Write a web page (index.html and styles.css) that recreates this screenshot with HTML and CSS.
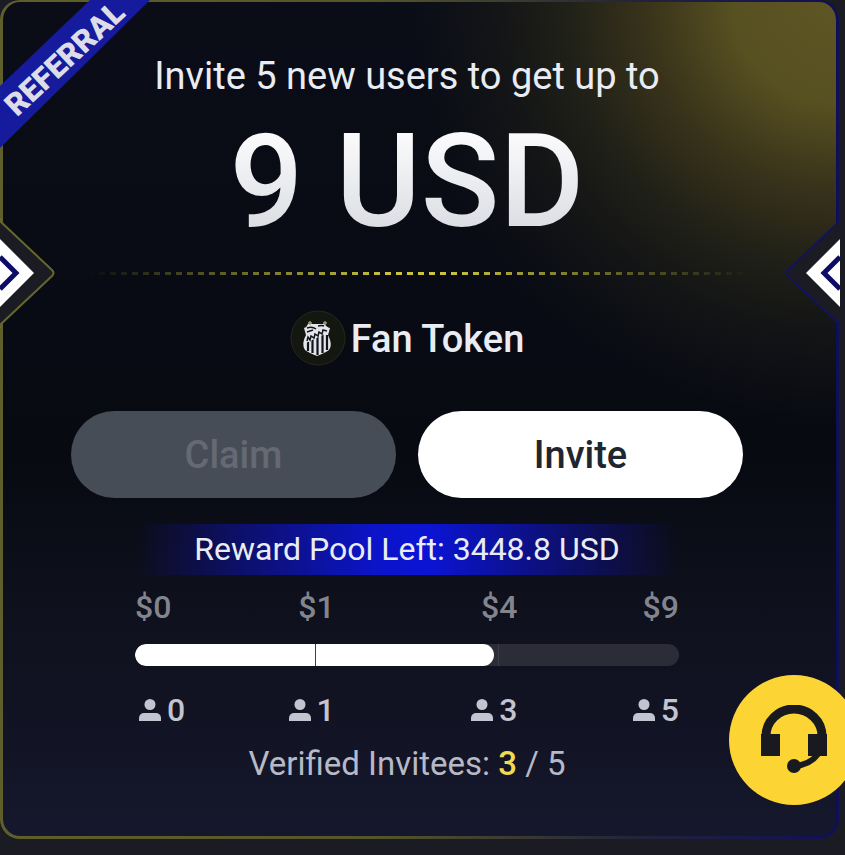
FILE: index.html
```html
<!DOCTYPE html>
<html lang="en">
<head>
    <meta charset="UTF-8">
    <meta name="viewport" content="width=device-width, initial-scale=1.0">
    <title>Referral Rewards</title>
    <link rel="stylesheet" href="styles.css">
</head>
<body>
    <svg class="sprite" width="0" height="0" aria-hidden="true">
        <symbol id="person" viewBox="0 0 22 22">
            <circle cx="11" cy="5.500" r="5.500" />
            <path d="M0 22v-3a5 5 0 0 1 5-5h12a5 5 0 0 1 5 5v3z" />
        </symbol>
        <symbol id="notch" viewBox="0 0 56 110">
            <path class="notch-fill" d="M0 4 3 5 52 52q3 3 0 6L3 105l-3 1z" />
            <path class="notch-line" d="M1 0v4l51 48q3 3 0 6L1 106v4" />
            <path class="notch-arrow" d="M0 21 34 55 0 89z" />
            <path class="notch-inner" d="M0 39 16 55 0 71" />
        </symbol>
    </svg>

    <main class="card">
        <div class="ribbon"><span>REFERRAL</span></div>

        <p class="subtitle">Invite 5 new users to get up to</p>
        <h1 class="amount">9 USD</h1>

        <div class="divider">
            <svg class="notch notch-left" aria-hidden="true"><use href="#notch" /></svg>
            <div class="dashes"></div>
            <svg class="notch notch-right" aria-hidden="true"><use href="#notch" /></svg>
        </div>

        <div class="token">
            <svg class="token-logo" viewBox="0 0 56 56" aria-hidden="true">
                <circle cx="28" cy="28" r="27" fill="#14170f" stroke="#25281a" />
                <path d="M14 18q3-1 4-4h17q1 3 5 4l-2 7q5 10 1 15-4 3-12 6-8-3-12-6-4-6 1-15z" fill="#e4e5ea" />
                <path d="M18 29v12M22.500 27v16M27.500 25v20M32.500 23v20M37 25v15" stroke="#10131b" stroke-width="2.200" />
                <path d="M15 28 38 17l1 5-23 11z" fill="#e4e5ea" />
                <path d="m17 31 1-4 2 3 1-4 3 2 1-4 3 2 1-4 3 2 1-4 4 1" fill="none" stroke="#10131b" stroke-width="1.500" />
                <path d="M17 18q5-2 9 1m2-3q4-1 6 0M17 22l6-2" fill="none" stroke="#10131b" stroke-width="1.500" />
                <path d="M20 11v4m-2-2h4M35 11v4m-2-2h4" stroke="#9b9b72" stroke-width="1.500" />
            </svg>
            <span>Fan Token</span>
        </div>

        <div class="actions">
            <button class="btn btn-claim" type="button" disabled>Claim</button>
            <button class="btn btn-invite" type="button">Invite</button>
        </div>

        <p class="pool">Reward Pool Left: 3448.8 USD</p>

        <section class="progress">
            <div class="scale rewards">
                <span>$0</span>
                <span>$1</span>
                <span>$4</span>
                <span>$9</span>
            </div>
            <div class="bar" role="progressbar" aria-label="Verified invitees" aria-valuemin="0" aria-valuemax="5" aria-valuenow="3">
                <div class="bar-fill" style="width: 66%"></div>
            </div>
            <div class="scale invitees">
                <span><svg aria-hidden="true"><use href="#person" /></svg>0</span>
                <span><svg aria-hidden="true"><use href="#person" /></svg>1</span>
                <span><svg aria-hidden="true"><use href="#person" /></svg>3</span>
                <span><svg aria-hidden="true"><use href="#person" /></svg>5</span>
            </div>
        </section>

        <p class="verified">Verified Invitees: <strong>3</strong> / 5</p>
    </main>

    <button class="support" type="button" aria-label="Support">
        <svg viewBox="0 0 66 70" aria-hidden="true">
            <path d="M5 32v-1a28 27 0 0 1 56 0v1" fill="none" stroke="#181a20" stroke-width="9" />
            <path d="M0 29h19v22H0zM47 29h19v22H47z" fill="#181a20" />
            <path d="M57 49q-8 11-24 12" fill="none" stroke="#181a20" stroke-width="6" />
            <circle cx="33" cy="61" r="7" fill="#181a20" />
        </svg>
    </button>
</body>
</html>
```

FILE: styles.css
```css
* {
    margin: 0;
    padding: 0;
    box-sizing: border-box;
}

body {
    background-color: #1b1b24;
    color: #eaecf3;
    font-family: Roboto, "Noto Sans", sans-serif;
    min-height: 100vh;
    overflow-x: hidden;
}

.sprite {
    position: absolute;
}

.card {
    position: relative;
    margin-right: 6px;
    padding: 48px 93px 52px 68px;
    border: 3px solid transparent;
    border-top-width: 2px;
    border-radius: 20px;
    text-align: center;
    background:
        radial-gradient(ellipse 430px 420px at 100% 0, #5f5524 0%, #575021 24%, rgba(62, 55, 27, 0.9) 44%, rgba(38, 38, 24, 0.8) 62%, rgba(24, 25, 22, 0.6) 80%, rgba(16, 18, 20, 0) 100%) padding-box,
        linear-gradient(180deg, #0a0d17 0%, #080a12 55%, #0f111e 75%, #15172c 100%) padding-box,
        linear-gradient(90deg, #5f5f2b 0%, #55552a 45%, #24243a 75%, #0f0f58 100%) border-box;
}

.ribbon {
    position: absolute;
    top: -2px;
    left: -3px;
    width: 150px;
    height: 150px;
    clip-path: polygon(0 86px, 90px 0, 150px 0, 0 148px);
    background-color: #151b9c;
    display: flex;
    align-items: center;
    justify-content: center;
}

.ribbon span {
    margin: -32px 0 0 -20px;
    color: #dcdde8;
    font-size: 31px;
    line-height: 32px;
    font-weight: 900;
    transform: rotate(-43deg);
}

.subtitle {
    font-size: 38px;
    line-height: 52px;
}

.amount {
    margin-top: 4px;
    font-size: 130px;
    line-height: 152px;
    font-weight: 500;
    background: linear-gradient(180deg, #fafafc 20%, #dcdee3 80%);
    -webkit-background-clip: text;
    background-clip: text;
    color: transparent;
}

.divider {
    position: relative;
    margin: 12px -96px 0 -71px;
    height: 6px;
    display: flex;
    align-items: center;
}

.dashes {
    flex: 1;
    margin: 0 88px;
    height: 3px;
    background: repeating-linear-gradient(90deg, #c9c33f 0, #c9c33f 6px, transparent 6px, transparent 11px);
    mask-image: linear-gradient(90deg, transparent, #000 45%, #000 55%, transparent);
}

.notch {
    position: absolute;
    top: -52px;
    width: 56px;
    height: 110px;
    stroke: #66662d;
}

.notch-left {
    left: 0;
}

.notch-right {
    right: -1px;
    transform: scaleX(-1);
    stroke: #13135c;
}

.notch-fill {
    fill: #1b1b23;
    stroke: none;
}

.notch-line {
    fill: none;
    stroke-width: 2;
}

.notch-arrow {
    fill: #ffffff;
    stroke: none;
}

.notch-inner {
    fill: none;
    stroke: #0d0d66;
    stroke-width: 5;
}

.token {
    margin-top: 34px;
    display: flex;
    align-items: center;
    justify-content: center;
    gap: 5px;
    font-size: 38px;
    line-height: 56px;
    font-weight: 500;
}

.token span {
    padding-top: 3px;
    line-height: 53px;
}

.token-logo {
    width: 56px;
    height: 56px;
}

.actions {
    margin-top: 45px;
    display: flex;
    gap: 22px;
}

.btn {
    flex: 1;
    height: 87px;
    border: none;
    border-radius: 44px;
    font-family: inherit;
    font-size: 38px;
    font-weight: 500;
    cursor: pointer;
}

.btn-claim {
    background-color: #474d57;
    color: #646973;
    cursor: default;
}

.btn-invite {
    background-color: #ffffff;
    color: #202530;
}

.pool {
    margin: 26px 64px 0;
    font-size: 32px;
    line-height: 51px;
    background: linear-gradient(90deg, transparent 0%, #0d0f5c 16%, #0b14c8 44%, #0b14d4 54%, #0d0f68 80%, transparent 100%);
}

.progress {
    margin: 12px 64px 0;
}

.scale {
    display: grid;
    grid-template-columns: 50fr 149fr 182fr 161fr;
    justify-items: end;
    font-size: 32px;
    line-height: 40px;
    font-weight: 500;
}

.scale span:first-child {
    justify-self: start;
}

.rewards {
    color: #83858e;
}

.invitees {
    color: #c3c4d0;
}

.invitees span {
    display: flex;
    align-items: center;
    gap: 6px;
}

.invitees span:first-child {
    padding-left: 4px;
}

.invitees svg {
    width: 22px;
    height: 22px;
    fill: currentColor;
}

.bar {
    position: relative;
    height: 22px;
    margin: 17px 0 24px;
    border-radius: 11px;
    background-color: #2b2c37;
    overflow: hidden;
}

.bar-fill {
    height: 100%;
    border-radius: 11px;
    background-color: #ffffff;
}

/* step marks at one and two thirds */
.bar::after {
    content: "";
    position: absolute;
    inset: 0 33%;
    border: solid #3c3d48;
    border-width: 0 1px;
}

.verified {
    margin-top: 14px;
    color: #b7b9c6;
    font-size: 33px;
    line-height: 40px;
}

.verified strong {
    color: #f0dc4e;
    font-weight: 500;
}

.support {
    position: fixed;
    right: -14px;
    bottom: 50px;
    width: 130px;
    height: 130px;
    border: none;
    border-radius: 50%;
    background-color: #fcd535;
    display: flex;
    align-items: center;
    justify-content: center;
    cursor: pointer;
}

.support svg {
    width: 66px;
    height: 70px;
}
```
